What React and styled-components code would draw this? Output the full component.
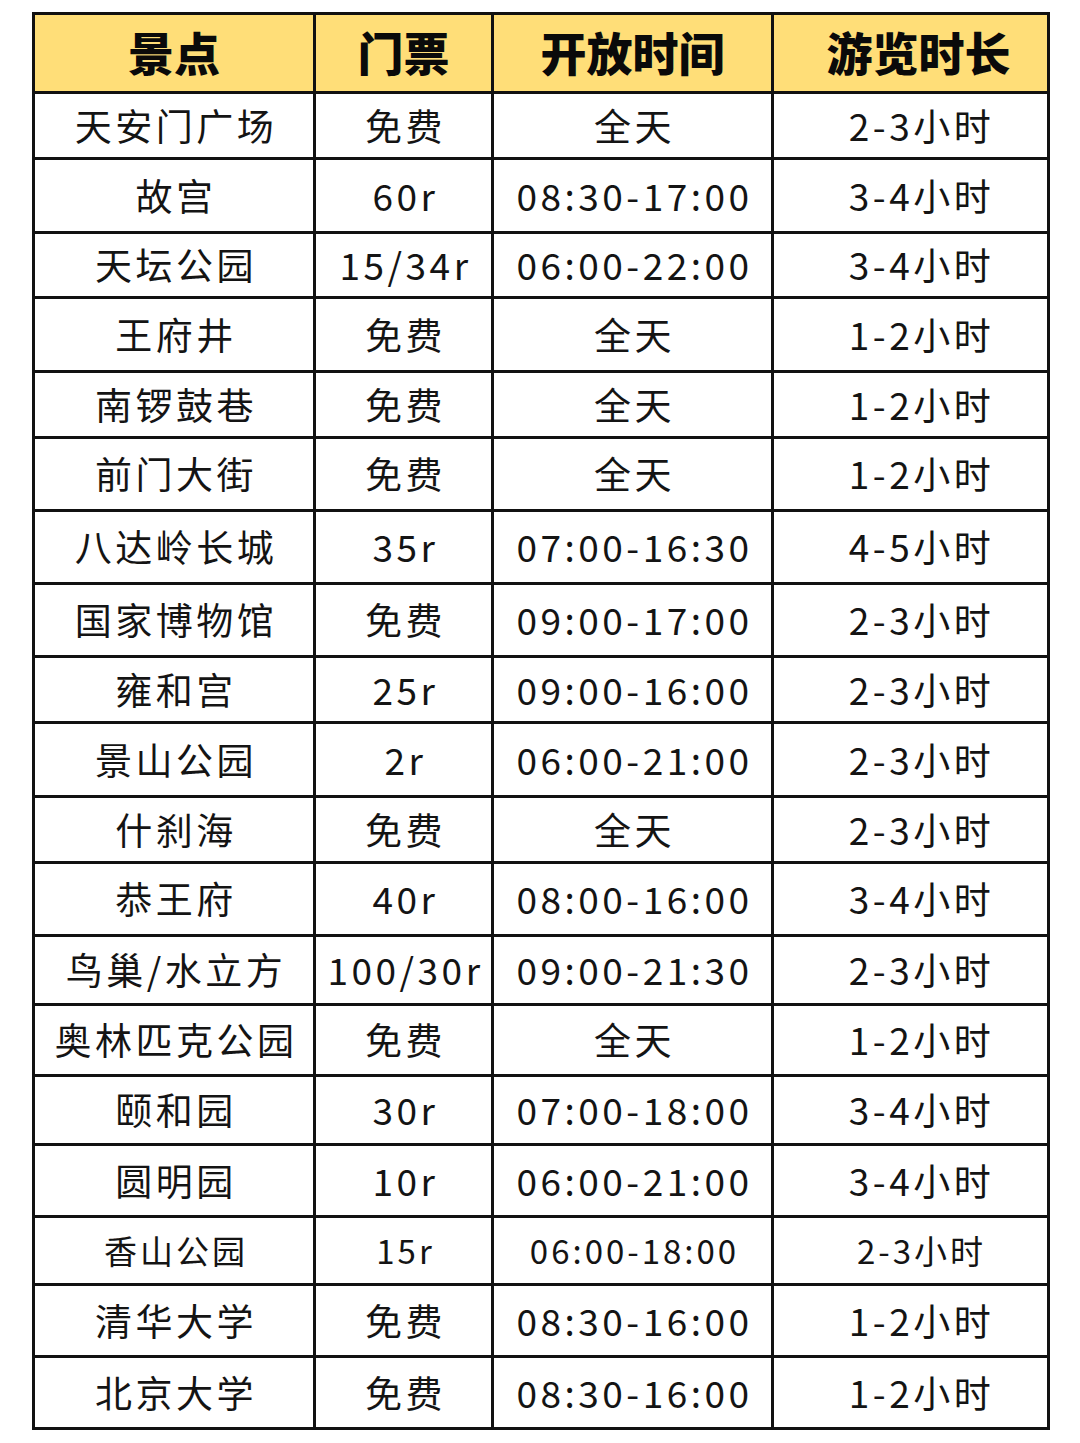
import React from "react";
import styled, { createGlobalStyle } from "styled-components";

const GlobalStyle = createGlobalStyle`
  html, body {
    margin: 0;
    padding: 0;
    background: #ffffff;
  }
  body {
    font-family: "Noto Sans CJK SC", "Noto Sans", sans-serif;
    color: #111;
  }
`;

const COLS = "281px 178px 280px 276px";

const rows = [
  { h: 66, cells: ["天安门广场", "免费", "全天", "2-3小时"] },
  { h: 74, cells: ["故宫", "60r", "08:30-17:00", "3-4小时"] },
  { h: 65, cells: ["天坛公园", "15/34r", "06:00-22:00", "3-4小时"] },
  { h: 74, cells: ["王府井", "免费", "全天", "1-2小时"] },
  { h: 66, cells: ["南锣鼓巷", "免费", "全天", "1-2小时"] },
  { h: 73, cells: ["前门大街", "免费", "全天", "1-2小时"] },
  { h: 73, cells: ["八达岭长城", "35r", "07:00-16:30", "4-5小时"] },
  { h: 73, cells: ["国家博物馆", "免费", "09:00-17:00", "2-3小时"] },
  { h: 66, cells: ["雍和宫", "25r", "09:00-16:00", "2-3小时"] },
  { h: 74, cells: ["景山公园", "2r", "06:00-21:00", "2-3小时"] },
  { h: 66, cells: ["什刹海", "免费", "全天", "2-3小时"] },
  { h: 73, cells: ["恭王府", "40r", "08:00-16:00", "3-4小时"] },
  { h: 69, cells: ["鸟巢/水立方", "100/30r", "09:00-21:30", "2-3小时"] },
  { h: 71, cells: ["奥林匹克公园", "免费", "全天", "1-2小时"] },
  { h: 69, cells: ["颐和园", "30r", "07:00-18:00", "3-4小时"] },
  { h: 72, cells: ["圆明园", "10r", "06:00-21:00", "3-4小时"] },
  { h: 68, small: true, cells: ["香山公园", "15r", "06:00-18:00", "2-3小时"] },
  { h: 72, cells: ["清华大学", "免费", "08:30-16:00", "1-2小时"] },
  { h: 72, cells: ["北京大学", "免费", "08:30-16:00", "1-2小时"] },
];

const Page = styled.div`
  width: 1080px;
  height: 1443px;
  padding: 12px 0 0 32px;
  box-sizing: border-box;
  background: #fff;
`;

const Table = styled.div`
  display: flex;
  flex-direction: column;
  width: 1018px;
  border-top: 3px solid #111;
  border-left: 3px solid #111;
  box-sizing: border-box;
`;

const Row = styled.div`
  display: grid;
  grid-template-columns: ${COLS};
  height: ${(p) => p.$h}px;
  background: ${(p) => (p.$head ? "#FFDE78" : "#fff")};
`;

const Cell = styled.div`
  display: flex;
  align-items: center;
  justify-content: center;
  border-right: 3px solid #111;
  border-bottom: 3px solid #111;
  box-sizing: border-box;
  white-space: nowrap;
  overflow: hidden;
  font-size: ${(p) => (p.$small ? 33 : 37)}px;
  letter-spacing: ${(p) => (p.$small ? 3 : 3.5)}px;
  padding-left: ${(p) => (p.$shift ? 22 : 4)}px;
  padding-bottom: 2px;
  font-weight: 400;
  color: #141414;
`;

const HeadCell = styled(Cell)`
  font-size: 46px;
  font-weight: 900;
  letter-spacing: 0;
  padding-left: ${(p) => (p.$shift ? 16 : 0)}px;
  padding-bottom: 4px;
  color: #0a0a0a;
`;

export default function App() {
  return (
    <>
      <GlobalStyle />
      <Page>
        <Table>
          <Row $head $h={79}>
            {["景点", "门票", "开放时间", "游览时长"].map((t, i) => (
              <HeadCell key={t} $shift={i === 3}>
                {t}
              </HeadCell>
            ))}
          </Row>
          {rows.map((r) => (
            <Row key={r.cells[0]} $h={r.h}>
              {r.cells.map((c, i) => (
                <Cell key={i} $small={r.small} $shift={i === 3}>
                  {c}
                </Cell>
              ))}
            </Row>
          ))}
        </Table>
      </Page>
    </>
  );
}
